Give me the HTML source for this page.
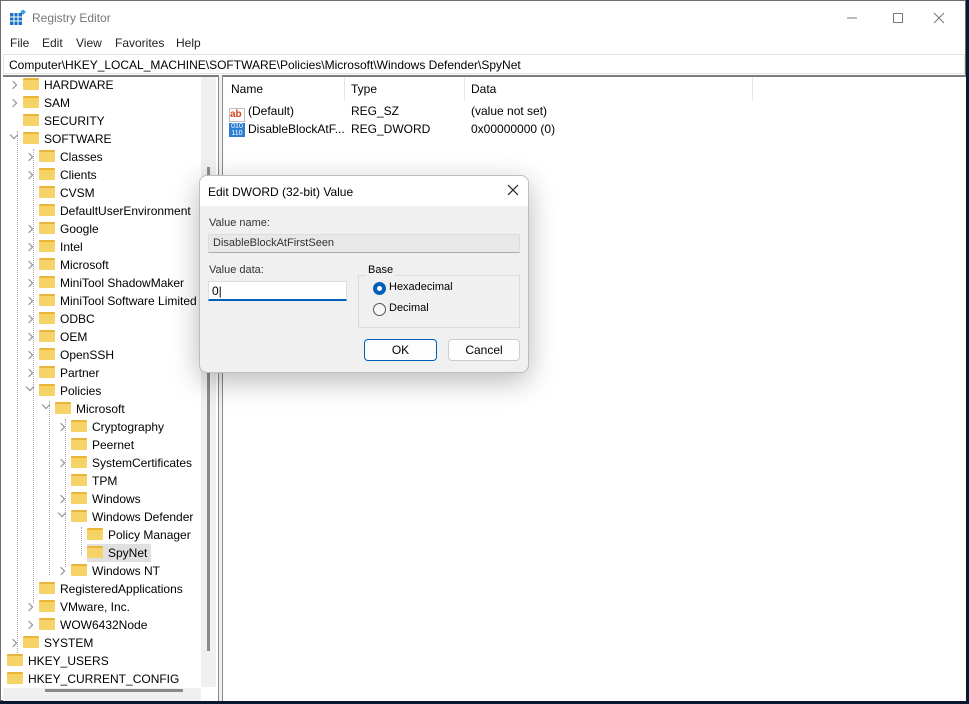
<!DOCTYPE html>
<html><head><meta charset="utf-8"><style>
*{margin:0;padding:0;box-sizing:border-box}
body{width:969px;height:704px;overflow:hidden;background:#0b1633;font-family:"Liberation Sans",sans-serif;font-size:12px;color:#000;position:relative}
.win{position:absolute;left:0;top:0;width:966px;height:701px;background:#fff;border:1px solid #6c6c72}
.title{position:absolute;left:31px;top:10px;font-size:12px;color:#777}
.menu{position:absolute;top:35px;font-size:12px;color:#222}
.addr{position:absolute;left:2px;top:53px;width:962px;height:20px;border:1px solid #e2e2e2;background:#fff;padding:3px 5px;font-size:12px}
.tree{position:absolute;left:2px;top:74px;width:215px;height:626px;border-top:2px solid #7a7a80;background:#fff;overflow:hidden}
.tree .r,.tree .c{margin-top:-1px}
.split{position:absolute;left:217px;top:74px;width:5px;height:626px;background:#f0f0f0;border-left:1px solid #8a8a8a;border-right:1px solid #8a8a8a}
.right{position:absolute;left:222px;top:74px;width:743px;height:626px;border-top:2px solid #7a7a80;background:#fff}
.r{position:absolute;height:18px;line-height:18px;white-space:nowrap}
.f{display:inline-block;width:16px;height:12px;background:#f7d267;border-top:2px solid #eab43a;vertical-align:-1px;margin-right:5px;border-radius:1px}
.c{position:absolute;width:6px;height:6px;border-right:1px solid #888;border-bottom:1px solid #888}
.ch{transform:rotate(-45deg)}
.cd{transform:rotate(45deg)}
.sel{background:#e0e0e0;padding-right:4px}
.col{position:absolute;top:2px;height:20px;line-height:20px}
.sep{position:absolute;top:0;width:1px;height:24px;background:#e5e5e5}
.dlg{position:absolute;left:199px;top:175px;width:330px;height:198px;background:#f0f0f0;border:1px solid #bdbdbd;border-radius:8px;box-shadow:0 8px 28px rgba(0,0,0,.28);overflow:hidden}
.dt{height:30px;background:#fff;padding:9px 8px;font-size:12px}
</style></head><body>
<div class="win">
<svg style="position:absolute;left:9px;top:9px" width="16" height="16"><rect x="0" y="3" width="12" height="12" fill="#1a73c8"/><g stroke="#fff" stroke-width="1"><line x1="4" y1="3" x2="4" y2="15"/><line x1="8" y1="3" x2="8" y2="15"/><line x1="0" y1="7" x2="12" y2="7"/><line x1="0" y1="11" x2="12" y2="11"/></g><rect x="11" y="0" width="4" height="4" fill="#3aa0e8" transform="rotate(45 13 2)"/></svg>
<div class="title">Registry Editor</div>
<svg style="position:absolute;left:840px;top:8px" width="120" height="18"><line x1="6" y1="9" x2="16" y2="9" stroke="#777"/><rect x="52.5" y="4.5" width="9" height="9" fill="none" stroke="#777"/><path d="M93 4l10 10M103 4l-10 10" stroke="#777"/></svg>
<div class="menu" style="left:9px">File</div><div class="menu" style="left:41px">Edit</div><div class="menu" style="left:75px">View</div><div class="menu" style="left:114px">Favorites</div><div class="menu" style="left:175px">Help</div>
<div class="addr">Computer\HKEY_LOCAL_MACHINE\SOFTWARE\Policies\Microsoft\Windows Defender\SpyNet</div>
<div class="tree">
<div style="position:absolute;left:198px;top:0;width:15px;height:610px;background:#f0f0f0"></div>
<div style="position:absolute;left:204px;top:90px;width:3px;height:484px;background:#8a8a8a"></div>
<div style="position:absolute;left:0;top:611px;width:198px;height:15px;background:#f0f0f0"></div>
<div style="position:absolute;left:42px;top:612px;width:138px;height:3px;background:#8a8a8a"></div>
<div style="position:absolute;left:14px;top:54px;height:526px;border-left:1px dotted #aaa"></div>
<div style="position:absolute;left:30px;top:72px;height:454px;border-left:1px dotted #aaa"></div>
<div style="position:absolute;left:46px;top:324px;height:174px;border-left:1px dotted #aaa"></div>
<div style="position:absolute;left:62px;top:342px;height:148px;border-left:1px dotted #aaa"></div>
<div style="position:absolute;left:78px;top:450px;height:28px;border-left:1px dotted #aaa"></div>

<div class="c ch" style="left:7px;top:6px"></div><div class="r" style="left:20px;top:0"><span class="f"></span>HARDWARE</div>
<div class="c ch" style="left:7px;top:24px"></div><div class="r" style="left:20px;top:18px"><span class="f"></span>SAM</div>
<div class="r" style="left:20px;top:36px"><span class="f"></span>SECURITY</div>
<div class="c cd" style="left:8px;top:56px"></div><div class="r" style="left:20px;top:54px"><span class="f"></span>SOFTWARE</div>
<div class="c ch" style="left:23px;top:78px"></div><div class="r" style="left:36px;top:72px"><span class="f"></span>Classes</div>
<div class="c ch" style="left:23px;top:96px"></div><div class="r" style="left:36px;top:90px"><span class="f"></span>Clients</div>
<div class="r" style="left:36px;top:108px"><span class="f"></span>CVSM</div>
<div class="r" style="left:36px;top:126px"><span class="f"></span>DefaultUserEnvironment</div>
<div class="c ch" style="left:23px;top:150px"></div><div class="r" style="left:36px;top:144px"><span class="f"></span>Google</div>
<div class="c ch" style="left:23px;top:168px"></div><div class="r" style="left:36px;top:162px"><span class="f"></span>Intel</div>
<div class="c ch" style="left:23px;top:186px"></div><div class="r" style="left:36px;top:180px"><span class="f"></span>Microsoft</div>
<div class="c ch" style="left:23px;top:204px"></div><div class="r" style="left:36px;top:198px"><span class="f"></span>MiniTool ShadowMaker</div>
<div class="c ch" style="left:23px;top:222px"></div><div class="r" style="left:36px;top:216px"><span class="f"></span>MiniTool Software Limited</div>
<div class="c ch" style="left:23px;top:240px"></div><div class="r" style="left:36px;top:234px"><span class="f"></span>ODBC</div>
<div class="c ch" style="left:23px;top:258px"></div><div class="r" style="left:36px;top:252px"><span class="f"></span>OEM</div>
<div class="c ch" style="left:23px;top:276px"></div><div class="r" style="left:36px;top:270px"><span class="f"></span>OpenSSH</div>
<div class="c ch" style="left:23px;top:294px"></div><div class="r" style="left:36px;top:288px"><span class="f"></span>Partner</div>
<div class="c cd" style="left:24px;top:308px"></div><div class="r" style="left:36px;top:306px"><span class="f"></span>Policies</div>
<div class="c cd" style="left:40px;top:326px"></div><div class="r" style="left:52px;top:324px"><span class="f"></span>Microsoft</div>
<div class="c ch" style="left:55px;top:348px"></div><div class="r" style="left:68px;top:342px"><span class="f"></span>Cryptography</div>
<div class="r" style="left:68px;top:360px"><span class="f"></span>Peernet</div>
<div class="c ch" style="left:55px;top:384px"></div><div class="r" style="left:68px;top:378px"><span class="f"></span>SystemCertificates</div>
<div class="r" style="left:68px;top:396px"><span class="f"></span>TPM</div>
<div class="c ch" style="left:55px;top:420px"></div><div class="r" style="left:68px;top:414px"><span class="f"></span>Windows</div>
<div class="c cd" style="left:56px;top:434px"></div><div class="r" style="left:68px;top:432px"><span class="f"></span>Windows Defender</div>
<div class="r" style="left:84px;top:450px"><span class="f"></span>Policy Manager</div>
<div class="r sel" style="left:84px;top:468px"><span class="f"></span>SpyNet</div>
<div class="c ch" style="left:55px;top:492px"></div><div class="r" style="left:68px;top:486px"><span class="f"></span>Windows NT</div>
<div class="r" style="left:36px;top:504px"><span class="f"></span>RegisteredApplications</div>
<div class="c ch" style="left:23px;top:528px"></div><div class="r" style="left:36px;top:522px"><span class="f"></span>VMware, Inc.</div>
<div class="c ch" style="left:23px;top:546px"></div><div class="r" style="left:36px;top:540px"><span class="f"></span>WOW6432Node</div>
<div class="c ch" style="left:7px;top:564px"></div><div class="r" style="left:20px;top:558px"><span class="f"></span>SYSTEM</div>
<div class="r" style="left:4px;top:576px"><span class="f"></span>HKEY_USERS</div>
<div class="r" style="left:4px;top:594px"><span class="f"></span>HKEY_CURRENT_CONFIG</div>
</div>
<div class="split"></div>
<div class="right">
<div class="sep" style="left:121px"></div><div class="sep" style="left:241px"></div><div class="sep" style="left:529px"></div>
<div class="col" style="left:8px">Name</div><div class="col" style="left:128px">Type</div><div class="col" style="left:248px">Data</div>
<div class="r" style="left:6px;top:25px"><span style="display:inline-block;width:16px;height:14px;border:1px solid #bbb;color:#d8401c;font-size:10px;font-weight:bold;line-height:11px;vertical-align:-2px;margin-right:3px">ab</span>(Default)</div>
<div class="r" style="left:128px;top:25px">REG_SZ</div><div class="r" style="left:248px;top:25px">(value not set)</div>
<div class="r" style="left:6px;top:43px"><span style="display:inline-block;width:16px;height:14px;background:#2b7fd4;color:#fff;font-size:7px;line-height:7px;vertical-align:-2px;margin-right:3px;text-align:center">010<br>110</span>DisableBlockAtF...</div>
<div class="r" style="left:128px;top:43px">REG_DWORD</div><div class="r" style="left:248px;top:43px">0x00000000 (0)</div>
</div>
</div>
<div class="dlg">
<div class="dt">Edit DWORD (32-bit) Value</div>
<svg style="position:absolute;left:307px;top:8px" width="12" height="12"><path d="M1 1l10 10M11 1L1 11" stroke="#222" stroke-width="1.2"/></svg>
<div style="position:absolute;left:9px;top:41px;font-size:11px;color:#333">Value name:</div>
<div style="position:absolute;left:8px;top:58px;width:312px;height:19px;border:1px solid #ddd;border-bottom-color:#aaa;background:#e8e8e8;padding:2px 4px;font-size:11px;color:#333">DisableBlockAtFirstSeen</div>
<div style="position:absolute;left:9px;top:88px;font-size:11px;color:#333">Value data:</div>
<div style="position:absolute;left:8px;top:105px;width:139px;height:20px;background:#fff;border:1px solid #ddd;border-bottom:2px solid #005fb8;padding:2px 3px;font-size:12px">0|</div>
<div style="position:absolute;left:158px;top:99px;width:162px;height:53px;border:1px solid #dadada"></div>
<div style="position:absolute;left:166px;top:88px;font-size:11px;background:#f0f0f0;padding:0 2px">Base</div>
<div style="position:absolute;left:173px;top:106px;width:13px;height:13px;border-radius:50%;background:#005fb8"><div style="margin:4px;width:5px;height:5px;border-radius:50%;background:#fff"></div></div>
<div style="position:absolute;left:189px;top:105px;font-size:11px">Hexadecimal</div>
<div style="position:absolute;left:173px;top:127px;width:13px;height:13px;border-radius:50%;border:1px solid #555;background:#f6f6f6"></div>
<div style="position:absolute;left:189px;top:126px;font-size:11px">Decimal</div>
<div style="position:absolute;left:164px;top:163px;width:73px;height:22px;border:1px solid #005fb8;border-radius:4px;background:#fdfdfd;text-align:center;line-height:20px">OK</div>
<div style="position:absolute;left:248px;top:163px;width:72px;height:22px;border:1px solid #ccc;border-radius:4px;background:#fdfdfd;text-align:center;line-height:20px">Cancel</div>
</div>
</body></html>
